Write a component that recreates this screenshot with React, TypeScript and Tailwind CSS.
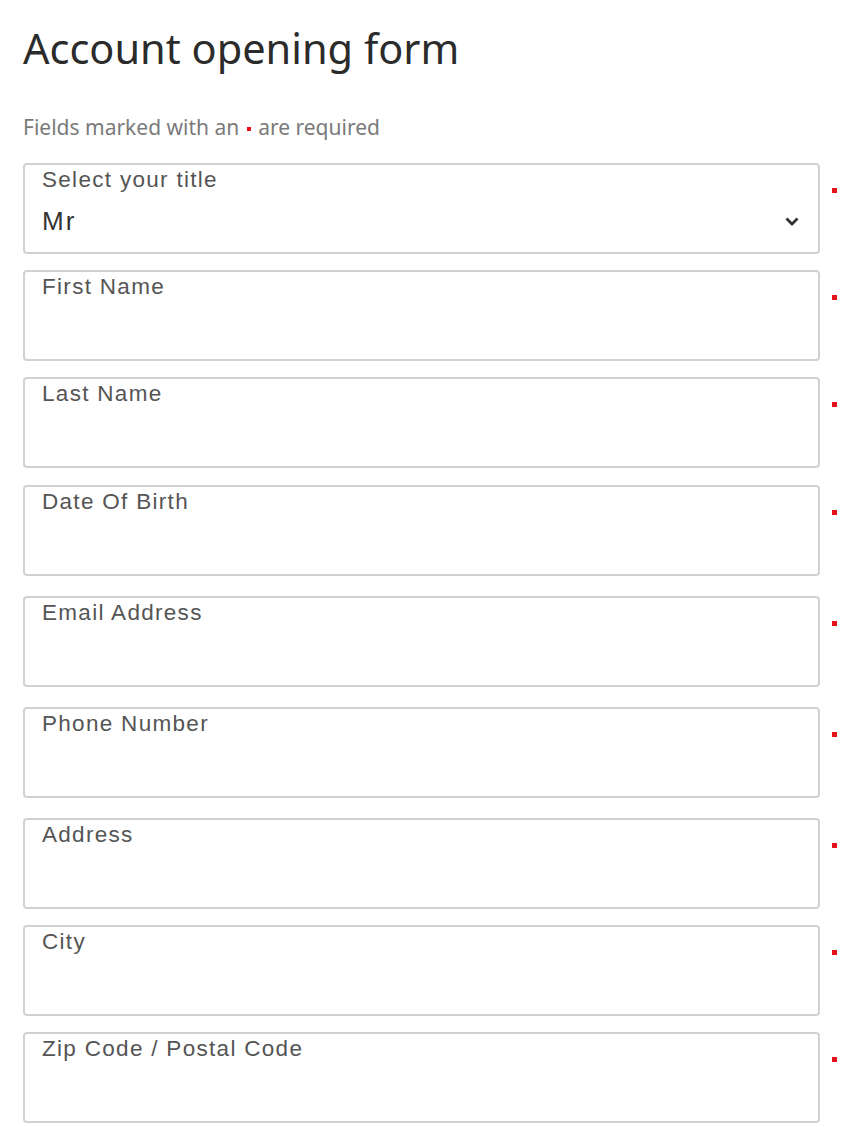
import React from "react";

const fields: { label: string; gap: string }[] = [
  { label: "First Name", gap: "mt-[16px]" },
  { label: "Last Name", gap: "mt-[16px]" },
  { label: "Date Of Birth", gap: "mt-[17px]" },
  { label: "Email Address", gap: "mt-[20px]" },
  { label: "Phone Number", gap: "mt-[20px]" },
  { label: "Address", gap: "mt-[20px]" },
  { label: "City", gap: "mt-[16px]" },
  { label: "Zip Code / Postal Code", gap: "mt-[16px]" },
];

function Dot() {
  return <span className="mt-[25px] ml-[12px] block h-[5px] w-[5px] shrink-0 bg-[#e6101a]" />;
}

export default function App() {
  return (
    <div className="min-h-[1127px] w-[850px] bg-white pl-[23px]" style={{ fontFamily: "'Liberation Sans', Arial, sans-serif" }}>
      <h1
        className="pt-[24px] text-[41.5px] leading-[48px] text-[#2b2b2b]"
        style={{ fontFamily: "'Noto Sans', sans-serif" }}
      >
        Account opening form
      </h1>
      <p
        className="mt-[43px] text-[21px] leading-[24px] text-[#7a7a7a]"
        style={{ fontFamily: "'Noto Sans', sans-serif" }}
      >
        Fields marked with an <span className="mx-[2px] inline-block h-[4px] w-[4px] align-middle bg-[#e6101a]" /> are required
      </p>
      <div className="mt-[24px] flex">
        <div className="relative h-[91px] w-[797px] rounded-[4px] border-2 border-[#d2d2d2] px-[17px] pt-[2px]">
          <div className="text-[22.5px] leading-[26px] tracking-[1.3px] text-[#555]">Select your title</div>
          <div className="mt-[13px] text-[26px] leading-[30px] tracking-[2px] text-[#333]">Mr</div>
          <svg className="absolute right-[18px] top-[51px]" width="16" height="11" viewBox="0 0 16 11">
            <path d="M2.5 2.5 L8 8 L13.5 2.5" fill="none" stroke="#333" strokeWidth="2.8" />
          </svg>
        </div>
        <Dot />
      </div>
      {fields.map((f) => (
        <div key={f.label} className={`${f.gap} flex`}>
          <div className="h-[91px] w-[797px] rounded-[4px] border-2 border-[#d2d2d2] px-[17px] pt-[2px]">
            <div className="text-[22.5px] leading-[26px] tracking-[1.3px] text-[#555]">{f.label}</div>
          </div>
          <Dot />
        </div>
      ))}
    </div>
  );
}
